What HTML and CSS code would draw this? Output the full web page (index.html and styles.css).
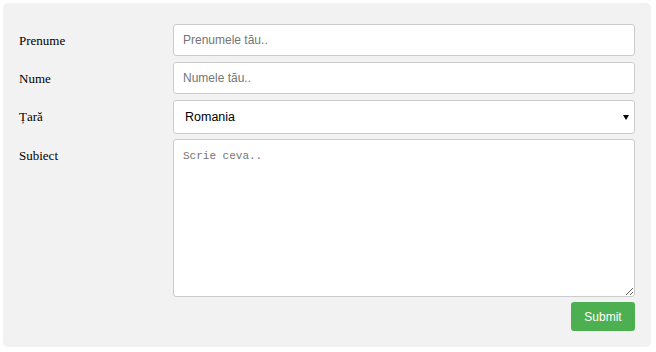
FILE: index.html
```html
<!DOCTYPE html>
<html lang="ro">
<head>
<meta charset="utf-8">
<title>Formular</title>
<link rel="stylesheet" href="styles.css">
</head>
<body>
<div class="container">
  <form class="form">
    <div class="col-label"><label for="fname">Prenume</label></div>
    <div class="col-field"><input type="text" id="fname" class="field" placeholder="Prenumele tău.."></div>

    <div class="col-label"><label for="lname">Nume</label></div>
    <div class="col-field"><input type="text" id="lname" class="field" placeholder="Numele tău.."></div>

    <div class="col-label"><label for="country">Țară</label></div>
    <div class="col-field select-wrap">
      <select id="country" class="field select">
        <option>Romania</option>
        <option>Moldova</option>
      </select>
      <span class="arrow"></span>
    </div>

    <div class="col-label"><label for="subject">Subiect</label></div>
    <div class="col-field"><textarea id="subject" class="field area" placeholder="Scrie ceva.."></textarea></div>

    <div class="actions"><button type="button" class="submit">Submit</button></div>
  </form>
</div>
</body>
</html>
```

FILE: styles.css
```css
html, body {
  background: #ffffff;
}
body {
  margin: 3px 5px 3px 3px;
}
.container {
  background: #f2f2f2;
  border-radius: 5px;
  padding: 16px;
}
.form {
  display: grid;
  grid-template-columns: 25% 75%;
  margin: 0;
}
.col-label {
  margin-top: 5px;
}
.col-label label {
  display: inline-block;
  padding: 9px 10px 9px 0;
  font-family: "Liberation Serif", "Times New Roman", serif;
  font-size: 13px;
  line-height: 15px;
  color: #000;
}
.col-field {
  margin-top: 5px;
}
.field {
  display: block;
  box-sizing: border-box;
  width: 100%;
  height: 32px;
  margin: 0;
  padding: 0 9px;
  border: 1px solid #cccccc;
  border-radius: 3px;
  background: #ffffff;
  font-family: "Liberation Sans", Arial, sans-serif;
  font-size: 12px;
  color: #000;
  outline: none;
}
.field::placeholder {
  color: #757575;
}
.select-wrap {
  position: relative;
}
.select {
  height: 34px;
  -webkit-appearance: none;
  appearance: none;
  padding: 0 11px;
  font-size: 12.5px;
}
.arrow {
  position: absolute;
  right: 6px;
  top: 15px;
  width: 0;
  height: 0;
  border-left: 3px solid transparent;
  border-right: 3px solid transparent;
  border-top: 5px solid #000;
  pointer-events: none;
}
.area {
  height: 158px;
  padding: 9px 9px;
  resize: vertical;
  font-family: "Liberation Mono", "DejaVu Sans Mono", monospace;
  font-size: 11px;
  line-height: 14px;
}
.actions {
  grid-column: 1 / -1;
  display: flex;
  justify-content: flex-end;
  margin-top: 5px;
}
.submit {
  width: 64px;
  height: 29px;
  padding: 0;
  border: none;
  border-radius: 3px;
  background: #4caf50;
  color: #ffffff;
  font-family: "Liberation Sans", Arial, sans-serif;
  font-size: 12px;
  cursor: pointer;
}
```
